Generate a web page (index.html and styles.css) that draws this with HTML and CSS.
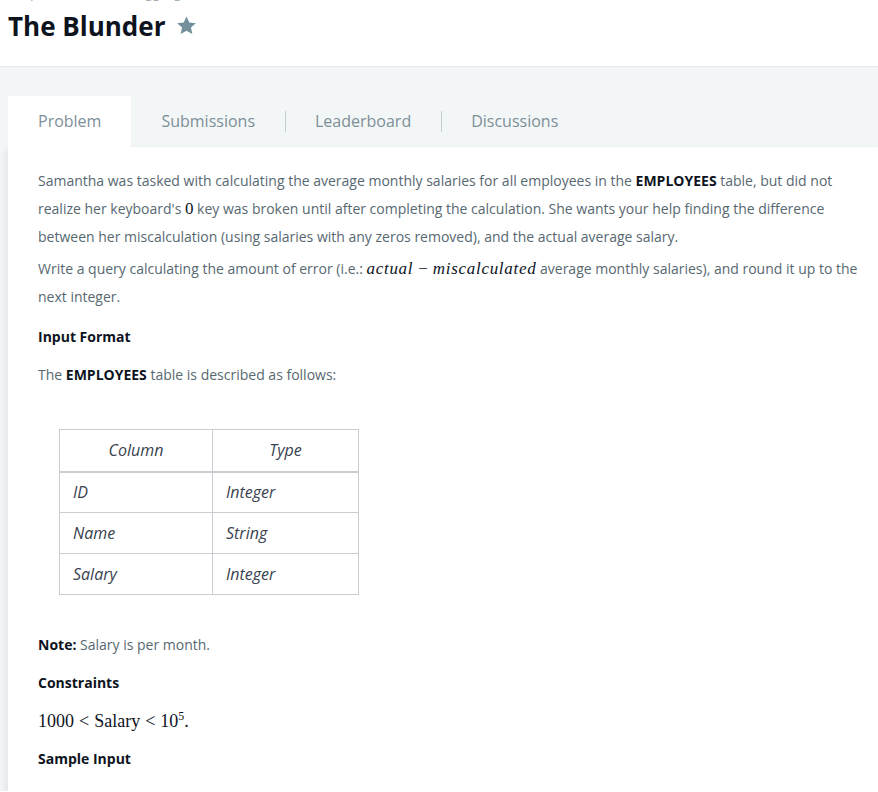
FILE: index.html
```html
<!DOCTYPE html>
<html lang="en">
<head>
<meta charset="utf-8">
<title>The Blunder</title>
<link rel="stylesheet" href="styles.css">
</head>
<body>
<header class="page-header">
  <nav class="breadcrumb">
    <span>Prepare</span><span class="sep">/</span><span>SQL</span><span class="sep">/</span><span>Aggregation</span><span class="sep">/</span><span>The Blunder</span>
  </nav>
  <div class="title-row">
    <h1 class="title">The Blunder</h1>
    <svg class="star" viewBox="0 0 24 24" width="21" height="21" aria-hidden="true"><path d="M12 1.6l3.2 6.9 7.5.8-5.6 5.1 1.6 7.4L12 18l-6.7 3.8 1.6-7.4-5.6-5.1 7.5-.8z" fill="#738f9b"/></svg>
  </div>
</header>
<main class="challenge">
  <ul class="tabs">
    <li class="tab active">Problem</li>
    <li class="tab">Submissions</li>
    <li class="tab sep-left">Leaderboard</li>
    <li class="tab sep-left">Discussions</li>
  </ul>
  <section class="panel">
    <p class="para tight">Samantha was tasked with calculating the average monthly salaries for all employees in the <strong>EMPLOYEES</strong> table, but did not realize her keyboard's <span class="m-up">0</span> key was broken until after completing the calculation. She wants your help finding the difference between her miscalculation (using salaries with any zeros removed), and the actual average salary.</p>
    <p class="para loose">Write a query calculating the amount of error (i.e.: <span class="m-it">actual</span><span class="m-op">&minus;</span><span class="m-it">miscalculated</span> average monthly salaries), and round it up to the next integer.</p>
    <h3 class="heading">Input Format</h3>
    <p class="para">The <strong>EMPLOYEES</strong> table is described as follows:</p>
    <table class="schema">
      <thead>
        <tr><th>Column</th><th>Type</th></tr>
      </thead>
      <tbody>
        <tr><td>ID</td><td>Integer</td></tr>
        <tr><td>Name</td><td>String</td></tr>
        <tr><td>Salary</td><td>Integer</td></tr>
      </tbody>
    </table>
    <p class="para"><strong>Note:</strong> Salary is per month.</p>
    <h3 class="heading">Constraints</h3>
    <p class="math-line">1000<span class="rel">&lt;</span>Salary<span class="rel">&lt;</span>10<sup>5</sup>.</p>
    <h3 class="heading">Sample Input</h3>
  </section>
</main>
</body>
</html>
```
FILE: styles.css
```css
* { box-sizing: border-box; }
html, body { margin: 0; padding: 0; }
body {
  font-family: "Open Sans", "Noto Sans", "DejaVu Sans", sans-serif;
  background: #ffffff;
  color: #576871;
  overflow: hidden;
  height: 792px;
}
.page-header {
  padding: 0 8px 23px 8px;
  border-bottom: 1px solid #e5e9eb;
  background: #fff;
  overflow: hidden;
}
.breadcrumb {
  font-size: 14px;
  line-height: 20px;
  height: 20px;
  margin-top: -18px;
  color: #a3adb2;
  display: flex;
}
.breadcrumb .sep { margin: 0 10px; }
.title-row {
  display: flex;
  align-items: center;
  margin-top: 7px;
  height: 34px;
}
.title {
  margin: 0;
  font-size: 26px;
  line-height: 34px;
  font-weight: 700;
  color: #0e141e;
}
.star { margin-left: 11px; margin-top: -2px; }
.challenge {
  background: #f3f6f7;
  padding: 29px 0 0 8px;
  height: 724px;
  overflow: hidden;
}
.tabs {
  list-style: none;
  margin: 0;
  padding: 0;
  display: flex;
  height: 51px;
}
.tab {
  position: relative;
  padding: 0 30px 2px 30px;
  height: 51px;
  display: flex;
  align-items: center;
  font-size: 16px;
  color: #7d8f98;
}
.tab.active { background: #fff; }
.tab.sep-left::before {
  content: "";
  position: absolute;
  left: 0;
  top: 15px;
  height: 21px;
  border-left: 1px solid #c7ced2;
}
.panel {
  background: #fff;
  padding: 20px 8px 0 30px;
  height: 673px;
  box-shadow: -3px 2px 6px rgba(0,0,0,0.06);
}
.para {
  margin: 0 0 10px 0;
  font-size: 14px;
  line-height: 28px;
  color: #576871;
}
.para.tight { margin-bottom: 4px; }
.para.loose { margin-bottom: 12px; }
.para strong, .heading { color: #0e141e; }
.para strong { font-weight: 700; }
.heading {
  margin: 0 0 10px 0;
  font-size: 14px;
  line-height: 28px;
  font-weight: 700;
}
.m-it, .m-up, .m-op {
  font-family: "Liberation Serif", "Times New Roman", serif;
  font-size: 17px;
  line-height: 1;
  color: #0e141e;
}
.m-it {
  font-style: italic;
  letter-spacing: 0.7px;
}
.m-up { font-weight: 400; }
.m-op { margin: 0 5px; }
.schema {
  border-collapse: collapse;
  margin: 40px 0 36px 21px;
  font-style: italic;
  font-size: 16px;
  color: #39424e;
}
.schema th, .schema td {
  border: 1px solid #cbcdd2;
  height: 41px;
  padding: 0 13px;
}
.schema th {
  font-weight: 400;
  text-align: center;
  height: 42px;
  border-bottom: 2px solid #cbcdd2;
}
.schema th:first-child, .schema td:first-child { width: 153px; }
.schema th:last-child, .schema td:last-child { width: 146px; }
.schema td { text-align: left; }
.math-line {
  margin: 0 0 10px 0;
  font-family: "Liberation Serif", "Times New Roman", serif;
  font-size: 18px;
  line-height: 28px;
  color: #0e141e;
}
.math-line .rel { margin: 0 5px; }
.math-line sup { font-size: 12px; line-height: 0; }
```
